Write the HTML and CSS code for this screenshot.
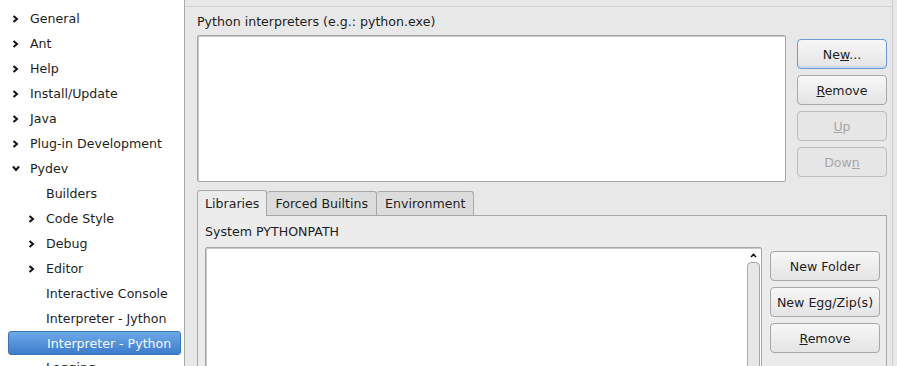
FILE: index.html
```html
<!DOCTYPE html>
<html lang="en">
<head>
    <meta charset="UTF-8">
    <title>Preferences - Interpreter - Python</title>
    <link rel="stylesheet" href="styles.css">
</head>
<body>
    <div class="window">
        <div class="tree">
            <div class="node"><span class="arrow"><svg width="7" height="8" viewBox="0 0 7 8"><polyline points="1.5,1 5,4 1.5,7" fill="none" stroke="#111" stroke-width="2"/></svg></span>General</div>
            <div class="node"><span class="arrow"><svg width="7" height="8" viewBox="0 0 7 8"><polyline points="1.5,1 5,4 1.5,7" fill="none" stroke="#111" stroke-width="2"/></svg></span>Ant</div>
            <div class="node"><span class="arrow"><svg width="7" height="8" viewBox="0 0 7 8"><polyline points="1.5,1 5,4 1.5,7" fill="none" stroke="#111" stroke-width="2"/></svg></span>Help</div>
            <div class="node"><span class="arrow"><svg width="7" height="8" viewBox="0 0 7 8"><polyline points="1.5,1 5,4 1.5,7" fill="none" stroke="#111" stroke-width="2"/></svg></span>Install/Update</div>
            <div class="node"><span class="arrow"><svg width="7" height="8" viewBox="0 0 7 8"><polyline points="1.5,1 5,4 1.5,7" fill="none" stroke="#111" stroke-width="2"/></svg></span>Java</div>
            <div class="node"><span class="arrow"><svg width="7" height="8" viewBox="0 0 7 8"><polyline points="1.5,1 5,4 1.5,7" fill="none" stroke="#111" stroke-width="2"/></svg></span>Plug-in Development</div>
            <div class="node"><span class="arrow"><svg width="8" height="7" viewBox="0 0 8 7"><polyline points="1,1.5 4,5 7,1.5" fill="none" stroke="#111" stroke-width="2"/></svg></span>Pydev</div>
            <div class="node sub"><span class="arrow"></span>Builders</div>
            <div class="node sub"><span class="arrow"><svg width="7" height="8" viewBox="0 0 7 8"><polyline points="1.5,1 5,4 1.5,7" fill="none" stroke="#111" stroke-width="2"/></svg></span>Code Style</div>
            <div class="node sub"><span class="arrow"><svg width="7" height="8" viewBox="0 0 7 8"><polyline points="1.5,1 5,4 1.5,7" fill="none" stroke="#111" stroke-width="2"/></svg></span>Debug</div>
            <div class="node sub"><span class="arrow"><svg width="7" height="8" viewBox="0 0 7 8"><polyline points="1.5,1 5,4 1.5,7" fill="none" stroke="#111" stroke-width="2"/></svg></span>Editor</div>
            <div class="node sub"><span class="arrow"></span>Interactive Console</div>
            <div class="node sub"><span class="arrow"></span>Interpreter - Jython</div>
            <div class="node sub selected"><span class="arrow"></span>Interpreter - Python</div>
            <div class="node sub"><span class="arrow"></span>Logging</div>
        </div>

        <div class="main">
            <div class="page">
                <div class="caption">Python interpreters (e.g.: python.exe)</div>
                <div class="row">
                    <div class="listbox interp"></div>
                    <div class="buttons">
                        <button class="btn default">Ne<u>w</u>...</button>
                        <button class="btn"><u>R</u>emove</button>
                        <button class="btn" disabled><u>U</u>p</button>
                        <button class="btn" disabled>Dow<u>n</u></button>
                    </div>
                </div>

                <div class="tabs">
                    <div class="tab active">Libraries</div>
                    <div class="tab">Forced Builtins</div>
                    <div class="tab">Environment</div>
                </div>
                <div class="tabpane">
                    <div class="caption small">System PYTHONPATH</div>
                    <div class="row">
                        <div class="listbox paths">
                            <div class="scrollbar">
                                <svg width="7" height="5" viewBox="0 0 7 5"><polyline points="1,4 3.5,1.5 6,4" fill="none" stroke="#111" stroke-width="1.6"/></svg>
                                <div class="thumb"></div>
                            </div>
                        </div>
                        <div class="buttons wide">
                            <button class="btn">New Folder</button>
                            <button class="btn">New Egg/Zip(s)</button>
                            <button class="btn"><u>R</u>emove</button>
                        </div>
                    </div>
                </div>
            </div>
            <div class="sash"></div>
        </div>
    </div>
</body>
</html>
```

FILE: styles.css
```css
* {
    margin: 0;
    padding: 0;
    box-sizing: border-box;
}
body {
    font-family: "DejaVu Sans", sans-serif;
    font-size: 12.6px;
    color: #1e1e1e;
    background: #e8e8e8;
    overflow: hidden;
}
.window {
    display: flex;
    height: 366px;
}
.tree {
    width: 185px;
    background: #fff;
    border-right: 1px solid #a9a9a9;
    padding-top: 6px;
    overflow: hidden;
}
.node {
    height: 25px;
    display: flex;
    align-items: center;
    padding-left: 12px;
    white-space: nowrap;
}
.node.sub {
    padding-left: 28px;
}
.arrow {
    width: 18px;
    display: flex;
    align-items: center;
}
.node.selected {
    margin: 0 3px 0 8px;
    padding-left: 20px;
    height: 24px;
    border-radius: 3px;
    color: #f4f8ff;
    background: linear-gradient(#6ea9e8, #3b7ccc);
    border: 1px solid #3a74bd;
}
.main {
    flex: 1;
    display: flex;
}
.page {
    flex: 1;
    margin-top: 6px;
    border-top: 1px solid #d2d2d2;
    padding: 0 5px 0 12px;
}
.caption {
    height: 28px;
    display: flex;
    align-items: center;
}
.row {
    display: flex;
    gap: 11px;
}
.listbox {
    background: #fff;
    border: 1px solid #a5a5a5;
    border-radius: 2px;
    box-shadow: inset 1px 1px 0 #c8c8c8;
}
.interp {
    flex: 1;
    height: 147px;
}
.buttons {
    width: 90px;
    display: flex;
    flex-direction: column;
    gap: 6px;
    padding-top: 4px;
}
.btn {
    height: 30px;
    font-family: inherit;
    font-size: 12.6px;
    color: #1e1e1e;
    border: 1px solid #a8a8a8;
    border-radius: 4px;
    background: linear-gradient(#f7f7f7, #e4e4e4);
}
.btn.default {
    border-color: #6b9bd2;
    box-shadow: inset 0 -2px 0 #c9d9ee;
}
.btn:disabled {
    color: #a6a6a6;
    border-color: #bdbdbd;
    background: #e6e6e6;
}
.tabs {
    display: flex;
    margin-top: 7px;
    height: 26px;
    align-items: flex-end;
}
.tab {
    height: 24px;
    padding: 0 8px;
    display: flex;
    align-items: center;
    border: 1px solid #a8a8a8;
    border-bottom: none;
    border-left: none;
    border-radius: 3px 3px 0 0;
    background: #dcdcdc;
}
.tab.active {
    height: 26px;
    padding: 0 7px;
    border-left: 1px solid #a8a8a8;
    background: #ececec;
    margin-bottom: -1px;
    position: relative;
}
.tabpane {
    background: #ececec;
    border: 1px solid #a8a8a8;
    border-bottom: none;
    height: 160px;
    padding: 0 6px 0 7px;
}
.caption.small {
    height: 31px;
}
.tabpane .row {
    gap: 8px;
}
.paths {
    flex: 1;
    height: 130px;
    display: flex;
    justify-content: flex-end;
    padding: 2px 0 0;
}
.scrollbar {
    width: 16px;
    display: flex;
    flex-direction: column;
    align-items: center;
    gap: 4px;
    padding-top: 3px;
}
.thumb {
    width: 13px;
    flex: 1;
    border: 1px solid #a8a8a8;
    border-radius: 4px 4px 0 0;
    background: #e7e7e7;
}
.buttons.wide {
    width: 110px;
    padding-top: 4px;
}
.sash {
    width: 5px;
    border-left: 1px solid #cfcfcf;
}
```
